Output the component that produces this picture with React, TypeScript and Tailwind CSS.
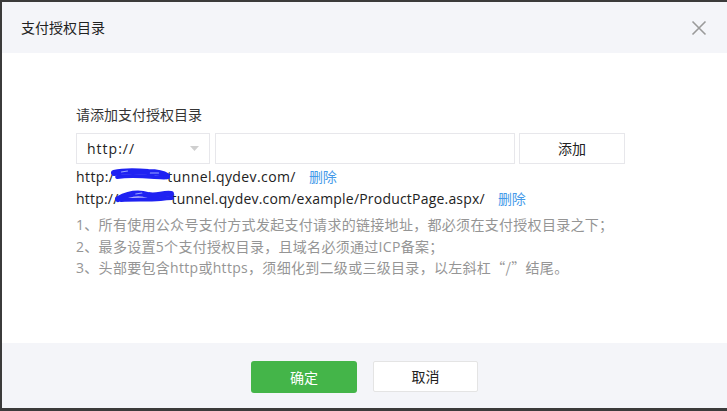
import React from "react";

const font = { fontFamily: '"Open Sans", "Noto Sans CJK SC", sans-serif' };
const cjk = { fontFamily: '"Noto Sans CJK SC", sans-serif' };

function Scribble({ variant }: { variant: 1 | 2 }) {
  return (
    <span className="relative inline-block h-[14px] w-[53px] align-middle">
      <svg
        className="absolute left-[-3px] top-[-3px]"
        width="60"
        height="14"
        viewBox="0 0 58 14"
        preserveAspectRatio="none"
      >
        {variant === 1 ? (
          <g fill="none" stroke="#1f22f2" strokeLinecap="round">
            <path d="M3 6 C 14 3, 26 4, 36 5 C 44 5, 50 6, 54 9" strokeWidth="6" />
            <path d="M6 10 C 18 8, 30 9, 42 10 C 48 10, 52 11, 55 10" strokeWidth="4" />
            <path d="M10 5 L 16 4" stroke="#9aa6ff" strokeWidth="1" />
            <path d="M38 6 L 46 6" stroke="#9aa6ff" strokeWidth="1" />
          </g>
        ) : (
          <g fill="none" stroke="#1f22f2" strokeLinecap="round">
            <path d="M3 10 C 12 5, 22 3, 32 6 C 40 8, 46 4, 54 5" strokeWidth="6" />
            <path d="M6 11 C 18 10, 30 11, 44 10 C 50 9, 53 9, 55 9" strokeWidth="4" />
            <path d="M20 5 L 26 4" stroke="#9aa6ff" strokeWidth="1" />
          </g>
        )}
      </svg>
    </span>
  );
}

export default function App() {
  return (
    <div
      className="flex h-[411px] w-[727px] flex-col bg-[#3b3b3b] pb-[3px] pl-[2px] pt-[2px]"
      style={font}
    >
      <div className="flex flex-1 flex-col bg-white">
        {/* header */}
        <div className="flex h-[51px] items-center justify-between bg-[#f4f5f9] pl-[19px] pr-[20px]">
          <span className="text-[14px] leading-[20px] text-[#222]">支付授权目录</span>
          <svg width="16" height="16" viewBox="0 0 16 16">
            <path d="M1.5 1.5 L14.5 14.5 M14.5 1.5 L1.5 14.5" stroke="#9a9a9a" strokeWidth="1.6" fill="none" />
          </svg>
        </div>

        {/* body */}
        <div className="flex-1 pl-[74px] pt-[52px] text-[14px] text-[#353535]">
          <div className="leading-[20px]">请添加支付授权目录</div>
          <div className="mt-[8px] flex h-[31px] gap-[5px]">
            <div className="flex w-[134px] items-center justify-between border border-[#e7e7eb] bg-white pl-[10px] pr-[10px]">
              <span className="text-[14px] tracking-[1px] text-[#222]">http://</span>
              <svg width="9" height="5" viewBox="0 0 9 5">
                <path d="M0 0 L9 0 L4.5 5 Z" fill="#cfcfcf" />
              </svg>
            </div>
            <div className="w-[300px] border border-[#e7e7eb] bg-white"></div>
            <button className="ml-[-1px] flex w-[106px] items-center justify-center border border-[#e7e7eb] bg-white text-[14px] text-[#222]">
              添加
            </button>
          </div>
          <div className="mt-[2px] flex items-center leading-[22px] tracking-[0.4px] text-[#222]">
            <span>http:/</span>
            <Scribble variant={1} />
            <span>tunnel.qydev.com/</span>
            <span className="ml-[13px] tracking-normal text-[#459ae9]">删除</span>
          </div>
          <div className="flex items-center leading-[22px] tracking-[0.2px] text-[#222]">
            <span>http://</span>
            <Scribble variant={2} />
            <span>tunnel.qydev.com/example/ProductPage.aspx/</span>
            <span className="ml-[13px] tracking-normal text-[#459ae9]">删除</span>
          </div>
          <div className="mt-[4px] text-[14px] leading-[21.5px] tracking-[0.3px] text-[#959595]">
            <div>1、所有使用公众号支付方式发起支付请求的链接地址，都必须在支付授权目录之下；</div>
            <div>2、最多设置5个支付授权目录，且域名必须通过ICP备案；</div>
            <div>
              3、头部要包含http或https，须细化到二级或三级目录，以左斜杠
              <span style={cjk}>“/”</span>结尾。
            </div>
          </div>
        </div>

        {/* footer */}
        <div className="flex h-[65px] items-start justify-center gap-[16px] bg-[#f4f5f9] pt-[18px]">
          <button className="h-[32px] w-[106px] rounded-[3px] bg-[#44b549] text-[14px] text-white">
            确定
          </button>
          <button className="h-[31px] w-[105px] rounded-[2px] border border-[#e4e4e4] bg-white text-[14px] text-[#222]">
            取消
          </button>
        </div>
      </div>
    </div>
  );
}
